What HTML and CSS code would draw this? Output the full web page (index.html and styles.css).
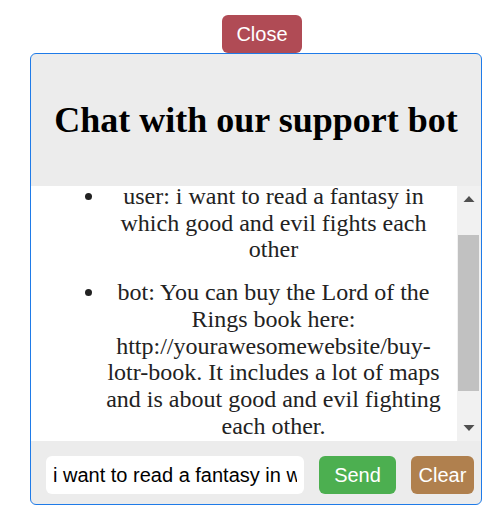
FILE: index.html
```html
<!DOCTYPE html>
<html lang="en">
<head>
<meta charset="utf-8">
<title>Support chat</title>
<link rel="stylesheet" href="styles.css">
<script src="script.js" defer></script>
</head>
<body>
<div class="page">
  <button class="close-btn" type="button">Close</button>
  <div class="chat">
    <div class="chat-header">
      <h1 class="chat-title">Chat with our support bot</h1>
    </div>
    <div class="messages-row">
      <div class="messages" id="messages">
        <ul class="message-list">
          <li class="message">user: i want to read a fantasy in which good and evil fights each other</li>
          <li class="message">bot: You can buy the Lord of the Rings book here: http://yourawesomewebsite/buy-lotr-book. It includes a lot of maps and is about good and evil fighting each other.</li>
        </ul>
      </div>
      <div class="scrollbar" aria-hidden="true">
        <div class="sb-button">
          <svg width="12" height="6" viewBox="0 0 12 6"><polygon points="0.5,6 6,0 11.5,6" fill="#505050"/></svg>
        </div>
        <div class="sb-track">
          <div class="sb-thumb"></div>
        </div>
        <div class="sb-button sb-button-down">
          <svg width="12" height="6" viewBox="0 0 12 6"><polygon points="0.5,0 11.5,0 6,6" fill="#505050"/></svg>
        </div>
      </div>
    </div>
    <div class="chat-input">
      <input class="text-input" type="text" value="i want to read a fantasy in which good and evil fights each other">
      <button class="send-btn" type="button">Send</button>
      <button class="clear-btn" type="button">Clear</button>
    </div>
  </div>
</div>
</body>
</html>
```

FILE: styles.css
```css
html, body {
  margin: 0;
  padding: 0;
  background: #ffffff;
}

.page {
  display: flex;
  flex-direction: column;
  align-items: flex-start;
  padding: 15px 0 0 30px;
}

.close-btn {
  margin-left: 192px;
  width: 80px;
  height: 38px;
  border: none;
  border-radius: 6px;
  background: #b04b55;
  color: #ffffff;
  font-family: "Liberation Sans", Arial, sans-serif;
  font-size: 20px;
  padding: 0;
}

.chat {
  width: 450px;
  height: 450px;
  border: 1px solid #1f7be8;
  border-radius: 6px;
  background: #ececec;
  display: flex;
  flex-direction: column;
  overflow: hidden;
}

.chat-header {
  height: 132px;
  flex: none;
  display: flex;
  align-items: center;
  justify-content: center;
}

.chat-title {
  margin: 0;
  font-family: "Liberation Serif", "Times New Roman", serif;
  font-size: 36px;
  font-weight: bold;
  line-height: 42px;
  color: #000000;
}

.messages-row {
  height: 255px;
  flex: none;
  display: flex;
}

.messages {
  width: 426px;
  flex: none;
  overflow: hidden;
  background: #ffffff;
}

.scrollbar {
  width: 24px;
  flex: none;
  background: #f1f1f1;
  display: flex;
  flex-direction: column;
}

.sb-button {
  height: 24px;
  flex: none;
  display: flex;
  justify-content: center;
  align-items: flex-start;
  padding-top: 10px;
  box-sizing: border-box;
}

.sb-button svg {
  display: block;
}

.sb-button-down {
  padding-top: 8px;
}

.sb-track {
  flex: 1;
  padding: 25px 2px 0 1px;
}

.sb-thumb {
  height: 156px;
  background: #c1c1c1;
}

.message-list {
  margin: 0;
  padding: 39px 16px 43px 75px;
  list-style: disc outside;
}

.message {
  font-family: "Liberation Serif", "Times New Roman", serif;
  font-size: 24px;
  line-height: 26.7px;
  color: #222222;
  text-align: center;
}

.message + .message {
  margin-top: 16px;
}

.chat-input {
  height: 63px;
  flex: none;
  box-sizing: border-box;
  padding: 15px 7px 10px 15px;
  display: flex;
  align-items: flex-start;
  gap: 15px;
}

.text-input {
  width: 258px;
  height: 38px;
  box-sizing: border-box;
  border: none;
  border-radius: 6px;
  background: #ffffff;
  padding: 0 7px;
  font-family: "Liberation Sans", Arial, sans-serif;
  font-size: 20px;
  color: #000000;
  outline: none;
}

.send-btn,
.clear-btn {
  height: 38px;
  border: none;
  border-radius: 6px;
  color: #ffffff;
  font-family: "Liberation Sans", Arial, sans-serif;
  font-size: 20px;
  padding: 0;
}

.send-btn {
  width: 77px;
  background: #4caf50;
}

.clear-btn {
  width: 63px;
  background: #b0804e;
}
```

FILE: script.js
```js
const messages = document.getElementById('messages');
messages.scrollTop = (messages.scrollHeight - messages.clientHeight) / 2;
```
